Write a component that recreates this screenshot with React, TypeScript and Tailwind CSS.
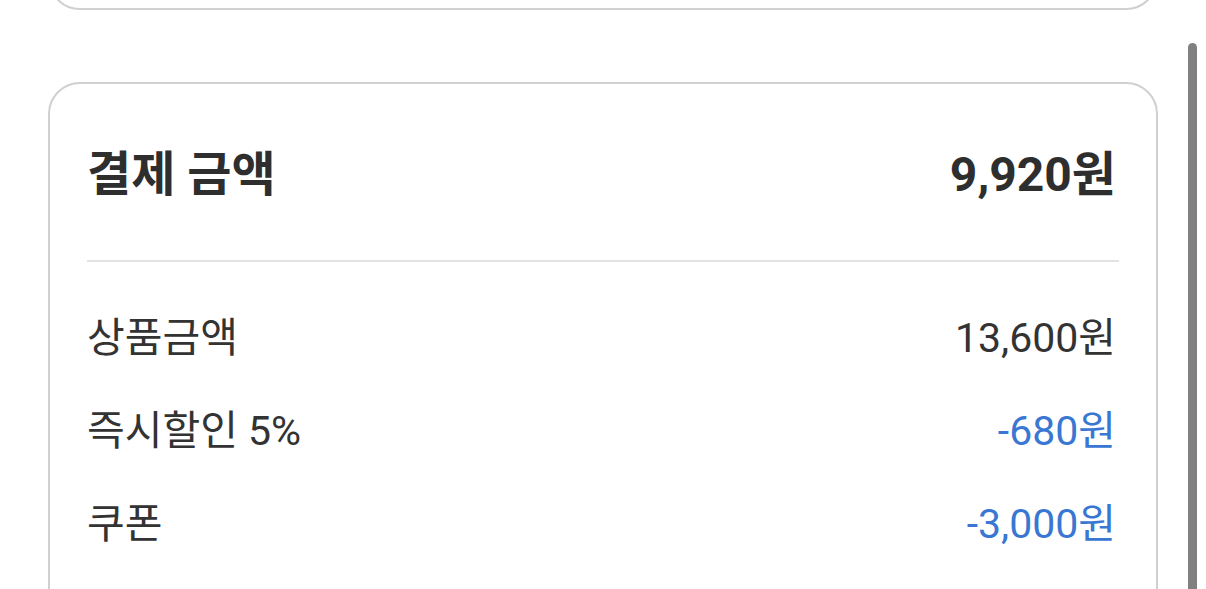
import React from "react";

const rows = [
  { label: "상품금액", amount: "13,600원", discount: false },
  { label: "즉시할인 5%", amount: "-680원", discount: true },
  { label: "쿠폰", amount: "-3,000원", discount: true },
];

function PriceRow({
  label,
  amount,
  discount,
}: {
  label: string;
  amount: string;
  discount: boolean;
}) {
  return (
    <div className="flex items-center justify-between text-[41px] leading-[48px]">
      <span className="text-[#333333]">{label}</span>
      <span className={discount ? "text-[#3a77d3]" : "text-[#333333]"}>
        {amount}
      </span>
    </div>
  );
}

export default function App() {
  return (
    <div
      className="relative h-[589px] w-[1206px] overflow-hidden bg-white"
      style={{ fontFamily: 'Roboto, "Noto Sans CJK KR", sans-serif' }}
    >
      <div className="flex flex-col pl-[48px] pr-[48px]">
        {/* previous card, scrolled mostly out of view */}
        <div className="-mt-[90px] h-[100px] rounded-[32px] border-2 border-[#d0d0d0]" />

        <div className="mt-[72px] h-[560px] rounded-[32px] border-2 border-[#d0d0d0] pl-[37px] pr-[37px]">
          <div className="flex items-center justify-between pt-[65px] pb-[59px] pr-[3px] text-[48px] font-bold leading-[52px] text-[#2e2e2e]">
            <span>결제 금액</span>
            <span>9,920원</span>
          </div>
          <div className="h-[2px] bg-[#e3e3e3]" />
          <div className="flex flex-col gap-[45px] pt-[52px] pr-[3px]">
            {rows.map((r) => (
              <PriceRow key={r.label} {...r} />
            ))}
          </div>
        </div>
      </div>

      {/* scrollbar thumb */}
      <div className="absolute left-[1188px] top-[43px] h-[560px] w-[9px] rounded-full bg-[#808080]" />
    </div>
  );
}
